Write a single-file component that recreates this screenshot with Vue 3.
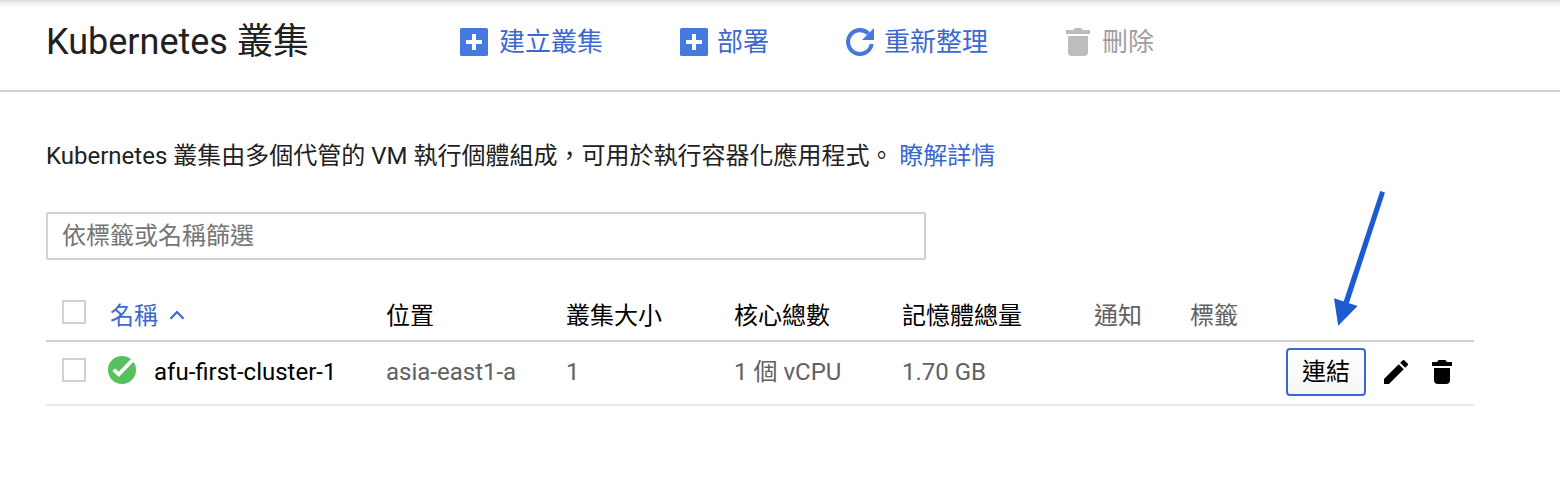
<script setup>
const columns = [
  { label: '位置', tone: 'strong' },
  { label: '叢集大小', tone: 'strong' },
  { label: '核心總數', tone: 'strong' },
  { label: '記憶體總量', tone: 'strong' },
  { label: '通知', tone: 'muted' },
  { label: '標籤', tone: 'muted' },
]

const clusters = [
  { name: 'afu-first-cluster-1', cells: ['asia-east1-a', '1', '1 個 vCPU', '1.70 GB', '', ''] },
]
</script>

<template>
  <div class="page">
    <header class="toolbar">
      <h1 class="title">Kubernetes 叢集</h1>
      <button class="action create">
        <svg width="28" height="28" viewBox="0 0 28 28"><rect width="28" height="28" rx="1.5" fill="#4679df" /><path d="M12 6h4v6h6v4h-6v6h-4v-6H6v-4h6z" fill="#fff" /></svg>
        <span>建立叢集</span>
      </button>
      <button class="action deploy">
        <svg width="28" height="28" viewBox="0 0 28 28"><rect width="28" height="28" rx="1.5" fill="#4679df" /><path d="M12 6h4v6h6v4h-6v6h-4v-6H6v-4h6z" fill="#fff" /></svg>
        <span>部署</span>
      </button>
      <button class="action refresh">
        <svg width="28" height="28" viewBox="0 0 28 28"><path d="M22.4 5.6A11.9 11.9 0 1 0 25.7 16" fill="none" stroke="#4679df" stroke-width="4.1" /><path d="M28 0v12H16z" fill="#4679df" /></svg>
        <span>重新整理</span>
      </button>
      <button class="action remove">
        <svg width="24" height="28" viewBox="0 0 24 28" fill="#bdbdbd"><path d="M0 2h7l2-2h6l2 2h7v4H0zM2 8h20v16q0 4-4 4H6q-4 0-4-4z" /></svg>
        <span>刪除</span>
      </button>
    </header>

    <main class="content">
      <p class="intro">Kubernetes 叢集由多個代管的 VM 執行個體組成，可用於執行容器化應用程式。 <a class="link">瞭解詳情</a></p>
      <div class="filter">依標籤或名稱篩選</div>

      <div class="table">
        <div class="row head">
          <span class="box"></span>
          <div class="name sorted">
            <span>名稱</span>
            <svg width="16" height="10" viewBox="0 0 16 10"><path d="M1.5 8.7 8 2l6.5 6.7" fill="none" stroke="#3c68d0" stroke-width="2.2" /></svg>
          </div>
          <span v-for="c in columns" :key="c.label" :class="c.tone">{{ c.label }}</span>
        </div>
        <div v-for="cluster in clusters" :key="cluster.name" class="row body">
          <span class="box"></span>
          <div class="name">
            <svg class="status" width="28" height="28" viewBox="0 0 28 28"><circle cx="14" cy="14" r="14" fill="#57c15f" /><path d="M5.7 13.6l5.1 4.8L24.4 4.3" fill="none" stroke="#fff" stroke-width="3.8" /></svg>
            <span>{{ cluster.name }}</span>
          </div>
          <span v-for="(cell, i) in cluster.cells" :key="i" class="cell">{{ cell }}</span>
          <div class="tools">
            <button class="connect">連結</button>
            <svg class="edit" width="24" height="24" viewBox="3 3 18 18"><path d="M3 17.25V21h3.75L17.81 9.94l-3.75-3.75zM20.71 7.04a1 1 0 0 0 0-1.41l-2.34-2.34a1 1 0 0 0-1.41 0l-1.83 1.83 3.75 3.75z" /></svg>
            <svg width="20" height="24" viewBox="0 0 20 24"><path d="M0 2h5l1.6-2h6.8L15 2h5v4H0zM2 8h16v12q0 4-4 4H6q-4 0-4-4z" /></svg>
          </div>
        </div>
      </div>
    </main>

    <svg class="pointer" width="54" height="140" viewBox="0 0 54 140" fill="#1c5ad0"><path d="M50.2 1 55 2.6 18.8 113.5l-5.2-1.7z" /><path d="M4 108.2 27.6 116 8.2 135.7z" /></svg>
  </div>
</template>

<style>
body { margin: 0; background: #fff; }
</style>

<style scoped>
.page {
  position: relative;
  height: 482px;
  overflow: hidden;
  background: linear-gradient(#dadada, #efefef 3px, #fff 8px);
  color: #212121;
  font: 24px/32px Roboto, "Noto Sans CJK TC", sans-serif;
}
.toolbar {
  display: flex;
  align-items: center;
  box-sizing: border-box;
  height: 92px;
  padding: 0 46px 6px;
  border-bottom: 2px solid #d2d2d2;
}
.title {
  width: 414px;
  margin: 0;
  font-size: 36px;
  line-height: 48px;
  font-weight: 400;
  white-space: nowrap;
}
button { font: inherit; padding: 0; border: 0; background: none; }
.action {
  display: flex;
  align-items: center;
  gap: 10px;
  color: #3c68d0;
  font-size: 26px;
  line-height: 36px;
  white-space: nowrap;
}
.create { width: 220px; gap: 11px; }
.deploy { width: 166px; gap: 9px; }
.refresh { width: 220px; }
.remove { gap: 12px; color: #9e9e9e; }
.content { padding: 48px 86px 0 46px; }
.intro { margin: 0; white-space: nowrap; }
.link { color: #3c68d0; }
.filter {
  box-sizing: border-box;
  width: 880px;
  height: 48px;
  margin-top: 40px;
  padding: 6px 14px;
  border: 2px solid #d2d2d2;
  border-radius: 2px;
  color: #757575;
}
.table { margin-top: 24px; }
.row {
  display: grid;
  grid-template-columns: 48px 276px 180px 168px 168px 192px 96px 96px 188px;
  align-items: center;
  box-sizing: border-box;
  padding-left: 16px;
  white-space: nowrap;
  width: 1428px;
}
.head { height: 58px; padding-top: 8px; border-bottom: 2px solid #d2d2d2; }
.body { height: 64px; padding-bottom: 2px; border-bottom: 2px solid #e8e8e8; }
.box {
  box-sizing: border-box;
  width: 24px;
  height: 24px;
  border: 2px solid #d2d2d2;
  margin-bottom: 4px;
}
.head .box { margin-bottom: 8px; }
.name { display: flex; align-items: center; color: #000; }
.sorted { gap: 11px; color: #3c68d0; }
.sorted svg { margin-bottom: 3px; }
.status { margin: 0 18px 4px -2px; }
.strong { color: #000; }
.muted, .cell { color: #616161; }
.tools { display: flex; align-items: center; }
.connect {
  box-sizing: border-box;
  width: 80px;
  height: 48px;
  margin-right: 18px;
  border: 2px solid #3c68d0;
  border-radius: 4px;
  background: linear-gradient(#fff, #f7f7f7);
  color: #000;
}
.edit { margin-right: 24px; }
.pointer { position: absolute; left: 1330px; top: 190px; overflow: visible; }
</style>
